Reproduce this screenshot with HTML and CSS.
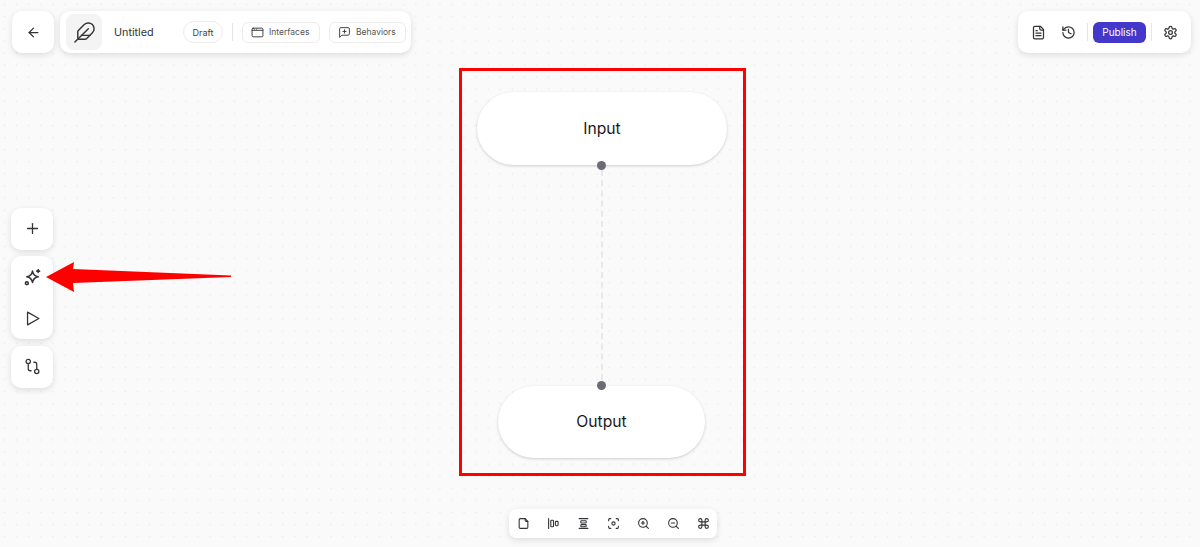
FILE: index.html
```html
<!DOCTYPE html>
<html>
  <head>
    <title>Untitled</title>
    <link rel="stylesheet" href="styles.css">
  </head>

  <body>
    <div class="canvas">
      <header class="topbar">
        <button class="card icon-btn back">
          <svg class="icon" viewBox="0 0 24 24"><path d="m12 19-7-7 7-7"/><path d="M19 12H5"/></svg>
        </button>
        <div class="card toolbar">
          <div class="logo">
            <svg class="icon big" viewBox="0 0 24 24"><path d="M12.67 19a2 2 0 0 0 1.416-.588l6.154-6.172a6 6 0 0 0-8.49-8.49L5.586 9.914A2 2 0 0 0 5 11.328V18a1 1 0 0 0 1 1z"/><path d="M16 8 2 22"/><path d="M17.5 15H9"/></svg>
          </div>
          <span class="title">Untitled</span>
          <span class="pill">Draft</span>
          <span class="divider"></span>
          <button class="tab">
            <svg class="icon" viewBox="0 0 24 24"><rect x="2" y="4" width="20" height="16" rx="2"/><path d="M2 8h20"/><path d="M6 6h.01"/><path d="M10 6h.01"/></svg>
            Interfaces
          </button>
          <button class="tab">
            <svg class="icon" viewBox="0 0 24 24"><path d="M21 15a2 2 0 0 1-2 2H7l-4 4V5a2 2 0 0 1 2-2h14a2 2 0 0 1 2 2z"/><path d="M12 7v6"/><path d="M9 10h6"/></svg>
            Behaviors
          </button>
        </div>
        <div class="card actions">
          <svg class="icon doc" viewBox="0 0 24 24"><path d="M15 2H6a2 2 0 0 0-2 2v16a2 2 0 0 0 2 2h12a2 2 0 0 0 2-2V7z"/><path d="M14 2v4a2 2 0 0 0 2 2h4"/><path d="M8 13h8"/><path d="M8 17h8"/><path d="M8 9h2"/></svg>
          <svg class="icon history" viewBox="0 0 24 24"><path d="M3 12a9 9 0 1 0 9-9 9.75 9.75 0 0 0-6.74 2.74L3 8"/><path d="M3 3v5h5"/><path d="M12 7v5l4 2"/></svg>
          <span class="divider"></span>
          <button class="publish">Publish</button>
          <span class="divider"></span>
          <svg class="icon gear" viewBox="0 0 24 24"><path d="M12.22 2h-.44a2 2 0 0 0-2 2v.18a2 2 0 0 1-1 1.73l-.43.25a2 2 0 0 1-2 0l-.15-.08a2 2 0 0 0-2.73.73l-.22.38a2 2 0 0 0 .73 2.73l.15.1a2 2 0 0 1 1 1.72v.51a2 2 0 0 1-1 1.74l-.15.09a2 2 0 0 0-.73 2.73l.22.38a2 2 0 0 0 2.73.73l.15-.08a2 2 0 0 1 2 0l.43.25a2 2 0 0 1 1 1.73V20a2 2 0 0 0 2 2h.44a2 2 0 0 0 2-2v-.18a2 2 0 0 1 1-1.73l.43-.25a2 2 0 0 1 2 0l.15.08a2 2 0 0 0 2.73-.73l.22-.39a2 2 0 0 0-.73-2.73l-.15-.08a2 2 0 0 1-1-1.74v-.5a2 2 0 0 1 1-1.74l.15-.09a2 2 0 0 0 .73-2.73l-.22-.38a2 2 0 0 0-2.73-.73l-.15.08a2 2 0 0 1-2 0l-.43-.25a2 2 0 0 1-1-1.73V4a2 2 0 0 0-2-2z"/><circle cx="12" cy="12" r="3"/></svg>
        </div>
      </header>

      <aside class="rail">
        <button class="card icon-btn">
          <svg class="icon" viewBox="0 0 24 24"><path d="M5 12h14"/><path d="M12 5v14"/></svg>
        </button>
        <div class="card rail-group">
          <button class="icon-btn">
            <svg class="icon sparkle" viewBox="0 0 24 24"><path d="M12 3c.9 4.700 3.300 7.100 8 8-4.700.9-7.100 3.300-8 8-.9-4.700-3.300-7.100-8-8 4.700-.9 7.100-3.300 8-8z"/><path d="M20 1v4"/><path d="M18 3h4"/><circle cx="4" cy="20" r="2"/></svg>
          </button>
          <button class="icon-btn">
            <svg class="icon" viewBox="0 0 24 24"><polygon points="5 3 21 12 5 21 5 3"/></svg>
          </button>
        </div>
        <button class="card icon-btn">
          <svg class="icon" viewBox="0 0 24 24"><circle cx="6" cy="5" r="3"/><path d="M6 8v7a3 3 0 0 0 3 3h1"/><circle cx="18" cy="19" r="3"/><path d="M18 16V9a3 3 0 0 0-3-3h-1"/></svg>
        </button>
      </aside>

      <div class="node node-input">Input</div>
      <div class="node node-output">Output</div>
      <div class="edge"></div>
      <div class="port port-top"></div>
      <div class="port port-bottom"></div>

      <div class="highlight"></div>
      <svg class="arrow" viewBox="0 0 190 32"><polygon points="0,16 28,1 27,8 185,14.500 185,16 27,22 28,31"/></svg>

      <footer class="card dock">
        <svg class="icon" viewBox="0 0 24 24"><path d="M15 3H6a2 2 0 0 0-2 2v14a2 2 0 0 0 2 2h12a2 2 0 0 0 2-2V8z"/><path d="M15 3v3a2 2 0 0 0 2 2h3"/></svg>
        <svg class="icon" viewBox="0 0 24 24"><path d="M3 3v18"/><rect x="7" y="6" width="5" height="12" rx="1.500"/><rect x="15.500" y="8" width="5" height="8" rx="1.500"/></svg>
        <svg class="icon" viewBox="0 0 24 24"><path d="M4 3h16"/><path d="M4 21h16"/><rect x="7" y="7" width="10" height="4" rx="1.500"/><rect x="7" y="14" width="10" height="4" rx="1.500"/></svg>
        <svg class="icon" viewBox="0 0 24 24"><circle cx="12" cy="12" r="3"/><path d="M3 7V5a2 2 0 0 1 2-2h2"/><path d="M17 3h2a2 2 0 0 1 2 2v2"/><path d="M21 17v2a2 2 0 0 1-2 2h-2"/><path d="M7 21H5a2 2 0 0 1-2-2v-2"/></svg>
        <svg class="icon" viewBox="0 0 24 24"><circle cx="11" cy="11" r="8"/><path d="m21 21-4.300-4.300"/><path d="M11 8v6"/><path d="M8 11h6"/></svg>
        <svg class="icon" viewBox="0 0 24 24"><circle cx="11" cy="11" r="8"/><path d="m21 21-4.300-4.300"/><path d="M8 11h6"/></svg>
        <svg class="icon" viewBox="0 0 24 24"><path d="M15 6v12a3 3 0 1 0 3-3H6a3 3 0 1 0 3 3V6a3 3 0 1 0-3 3h12a3 3 0 1 0-3-3"/></svg>
      </footer>
    </div>
  </body>
</html>
```

FILE: styles.css
```css
* {
  box-sizing: border-box;
}

body {
  margin: 0;
  font-family: "Inter", "Liberation Sans", sans-serif;
  color: #222;
}

button {
  font: inherit;
  border: none;
  background: none;
  padding: 0;
}

.canvas {
  position: relative;
  height: 547px;
  overflow: hidden;
  background-color: #fafafa;
  background-image: radial-gradient(#eeeeee 0.7px, transparent 1.2px);
  background-size: 12.1px 12.1px;
  background-position: -1.5px -1.5px;
}

.card {
  background: #fff;
  border-radius: 10px;
  box-shadow: 0 2px 6px rgba(0, 0, 0, 0.12);
}

.icon {
  width: 15px;
  height: 15px;
  fill: none;
  stroke: #333338;
  stroke-width: 2;
  stroke-linecap: round;
  stroke-linejoin: round;
  flex-shrink: 0;
}

.icon.big {
  width: 23px;
  height: 23px;
  stroke-width: 1.5;
}

.icon-btn {
  width: 42px;
  height: 42px;
  display: flex;
  align-items: center;
  justify-content: center;
}

/* top bar */
.topbar {
  display: flex;
  align-items: center;
  gap: 6px;
  padding: 11px 9px 0 12px;
}

.toolbar {
  height: 42px;
  width: 351px;
  display: flex;
  align-items: center;
  padding: 0 5px 0 6px;
}

.logo {
  width: 36px;
  height: 36px;
  flex-shrink: 0;
  border-radius: 8px;
  background: #f4f4f4;
  display: flex;
  align-items: center;
  justify-content: center;
}

.title {
  font-size: 10.8px;
  margin: 1px 0 0 12px;
  width: 69px;
  flex-shrink: 0;
  color: #333;
}

.pill {
  font-size: 9px;
  height: 22px;
  width: 40px;
  flex-shrink: 0;
  border: 1px solid #ececec;
  border-radius: 11px;
  display: flex;
  align-items: center;
  justify-content: center;
  color: #444;
}

.divider {
  width: 1px;
  height: 18px;
  flex-shrink: 0;
  background: #e6e6e6;
  margin: 0 9px;
}

.tab {
  height: 21px;
  width: 78px;
  flex-shrink: 0;
  border: 1px solid #ececec;
  border-radius: 6px;
  display: flex;
  align-items: center;
  gap: 5px;
  padding: 0 8px;
  font-size: 8.5px;
  color: #555;
  margin-right: 9px;
}

.tab:last-child {
  margin-right: 0;
  width: 77px;
}

.tab .icon {
  width: 13px;
  height: 13px;
  stroke-width: 1.7;
}

.actions {
  margin-left: auto;
  width: 173px;
  height: 42px;
  display: flex;
  align-items: center;
  padding-left: 13px;
}

.actions .divider {
  margin: 0;
}

.doc {
  margin-right: 15px;
}

.history {
  margin-right: 11px;
}

.gear {
  margin-left: 11px;
}

.publish {
  width: 53px;
  height: 21px;
  margin: 0 5px;
  background: #4338ca;
  color: #fff;
  border-radius: 6px;
  font-size: 10px;
  flex-shrink: 0;
}

/* left rail */
.rail {
  position: absolute;
  left: 11px;
  top: 208px;
  display: flex;
  flex-direction: column;
  gap: 6.75px;
}

.rail .icon-btn {
  height: 41.5px;
}

.rail .icon {
  width: 17px;
  height: 17px;
  stroke-width: 1.8;
}

.rail .icon.sparkle {
  stroke-width: 2.2;
}

.rail-group {
  display: flex;
  flex-direction: column;
}

/* flow diagram */
.node {
  position: absolute;
  background: #fff;
  border-radius: 37px;
  box-shadow: 0 1px 3px rgba(0, 0, 0, 0.18);
  display: flex;
  align-items: center;
  justify-content: center;
  font-size: 15.7px;
  color: #1a1a1a;
}

.node-input {
  left: 477px;
  top: 92px;
  width: 250px;
  height: 73px;
}

.node-output {
  left: 498px;
  top: 386px;
  width: 207px;
  height: 72px;
  padding-bottom: 2px;
}

.edge {
  position: absolute;
  left: 601px;
  top: 170px;
  height: 210px;
  border-left: 2px dashed #e8e8e8;
}

.port {
  position: absolute;
  left: 597px;
  width: 9px;
  height: 9px;
  border-radius: 50%;
  background: #6b6b76;
}

.port-top {
  top: 161px;
}

.port-bottom {
  top: 381px;
}

.highlight {
  position: absolute;
  left: 459px;
  top: 68px;
  width: 287px;
  height: 408px;
  border: 3px solid #f00;
}

.arrow {
  position: absolute;
  left: 46px;
  top: 261px;
  width: 190px;
  height: 32px;
  fill: #f00;
}

/* bottom dock */
.dock {
  position: absolute;
  left: 509px;
  top: 509px;
  width: 208px;
  height: 29px;
  border-radius: 7px;
  display: flex;
  align-items: center;
  justify-content: space-between;
  padding: 0 7.5px;
}

.dock .icon {
  width: 13px;
  height: 13px;
}
```
